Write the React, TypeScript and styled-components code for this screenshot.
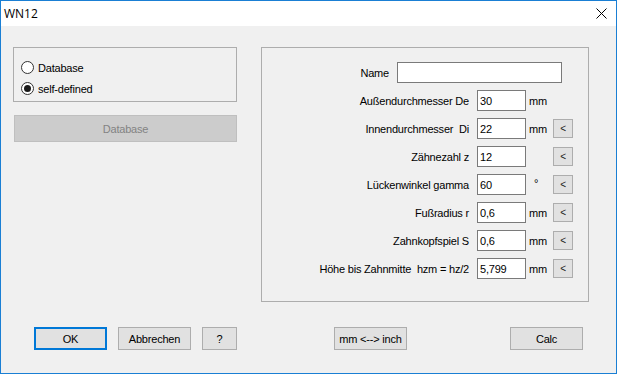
import React from "react";
import styled, { createGlobalStyle } from "styled-components";

const Global = createGlobalStyle`
  html, body { margin: 0; padding: 0; background: #ffffff; }
  * { box-sizing: border-box; }
`;

const Window = styled.div`
  width: 617px;
  height: 374px;
  border: 1px solid #1a7fd4;
  background: #f0f0f0;
  display: flex;
  flex-direction: column;
  font-family: "Liberation Sans", Arial, sans-serif;
  font-size: 11px;
  letter-spacing: -0.2px;
  color: #000;
`;

const TitleBar = styled.div`
  height: 25px;
  background: #ffffff;
  display: flex;
  align-items: center;
  justify-content: space-between;
  padding: 0 9px 0 3px;
`;

const Title = styled.span`
  font-family: "Open Sans", "Noto Sans", sans-serif;
  font-size: 12px;
  letter-spacing: 0;
  color: #000;
`;

const Body = styled.div`
  display: flex;
  gap: 24px;
  padding: 21px 0 0 12px;
`;

const LeftCol = styled.div`
  width: 224px;
  display: flex;
  flex-direction: column;
`;

const GroupBox = styled.div`
  height: 55px;
  border: 1px solid #adadad;
  padding: 9px 0 0 7px;
  display: flex;
  flex-direction: column;
`;

const RadioRow = styled.label`
  height: 21px;
  display: flex;
  align-items: center;
  gap: 4px;
`;

const RadioCircle = styled.span<{ $checked?: boolean }>`
  width: 13px;
  height: 13px;
  border-radius: 50%;
  border: 1px solid #333333;
  background: #ffffff;
  display: flex;
  align-items: center;
  justify-content: center;
  &::after {
    content: "";
    width: 7px;
    height: 7px;
    border-radius: 50%;
    background: ${(p) => (p.$checked ? "#1a1a1a" : "transparent")};
  }
`;

const DisabledButton = styled.div`
  margin: 13px 0 0 1px;
  width: 223px;
  height: 27px;
  background: #cccccc;
  border: 1px solid #bfbfbf;
  color: #838383;
  display: flex;
  align-items: center;
  justify-content: center;
`;

const Panel = styled.div`
  width: 328px;
  height: 255px;
  border: 1px solid #adadad;
  padding-top: 14px;
  display: flex;
  flex-direction: column;
  gap: 7px;
`;

const Row = styled.div`
  height: 21px;
  display: flex;
  align-items: center;
`;

const Label = styled.span<{ $w: number }>`
  width: ${(p) => p.$w}px;
  text-align: right;
  white-space: pre;
  margin-right: 8px;
`;

const Field = styled.div<{ $w: number }>`
  width: ${(p) => p.$w}px;
  height: 21px;
  border: 1px solid #7a7a7a;
  background: #ffffff;
  padding: 0 2px;
  display: flex;
  align-items: center;
`;

const Unit = styled.span<{ $indent?: number }>`
  width: 27px;
  padding-left: ${(p) => p.$indent ?? 3}px;
  align-self: ${(p) => (p.$indent ? "flex-start" : "center")};
  margin-top: ${(p) => (p.$indent ? "3px" : "0")};
`;

const SmallButton = styled.div`
  width: 20px;
  height: 19px;
  margin-top: 1px;
  align-self: flex-start;
  background: #e1e1e1;
  border: 1px solid #adadad;
  font-size: 10px;
  color: #222;
  display: flex;
  align-items: center;
  justify-content: center;
`;

const ButtonBar = styled.div`
  display: flex;
  margin-top: 25px;
  padding-left: 33px;
`;

const Button = styled.div<{ $w: number; $gap?: number; $default?: boolean }>`
  width: ${(p) => p.$w}px;
  height: 23px;
  margin-left: ${(p) => p.$gap ?? 0}px;
  background: #e1e1e1;
  border: ${(p) => (p.$default ? "2px solid #0078d7" : "1px solid #adadad")};
  display: flex;
  align-items: center;
  justify-content: center;
`;

type Param = { label: string; value: string; unit?: string; deg?: boolean; btn?: boolean };

const params: Param[] = [
  { label: "Außendurchmesser De", value: "30", unit: "mm" },
  { label: "Innendurchmesser  Di", value: "22", unit: "mm", btn: true },
  { label: "Zähnezahl z", value: "12", btn: true },
  { label: "Lückenwinkel gamma", value: "60", unit: "°", deg: true, btn: true },
  { label: "Fußradius r", value: "0,6", unit: "mm", btn: true },
  { label: "Zahnkopfspiel S", value: "0,6", unit: "mm", btn: true },
  { label: "Höhe bis Zahnmitte  hzm = hz/2", value: "5,799", unit: "mm", btn: true },
];

export default function App() {
  return (
    <>
      <Global />
      <Window>
        <TitleBar>
          <Title>WN12</Title>
          <svg width="11" height="11" viewBox="0 0 11 11">
            <path d="M0.5 0.5 L10.5 10.5 M10.5 0.5 L0.5 10.5" stroke="#000" strokeWidth="1" />
          </svg>
        </TitleBar>
        <Body>
          <LeftCol>
            <GroupBox>
              <RadioRow>
                <RadioCircle />
                Database
              </RadioRow>
              <RadioRow>
                <RadioCircle $checked />
                self-defined
              </RadioRow>
            </GroupBox>
            <DisabledButton>Database</DisabledButton>
          </LeftCol>
          <Panel>
            <Row>
              <Label $w={127}>Name</Label>
              <Field $w={165} />
            </Row>
            {params.map((p) => (
              <Row key={p.label}>
                <Label $w={207}>{p.label}</Label>
                <Field $w={49}>{p.value}</Field>
                <Unit $indent={p.deg ? 8 : undefined}>{p.unit ?? ""}</Unit>
                {p.btn && <SmallButton>&lt;</SmallButton>}
              </Row>
            ))}
          </Panel>
        </Body>
        <ButtonBar>
          <Button $w={73} $default>OK</Button>
          <Button $w={73} $gap={11}>Abbrechen</Button>
          <Button $w={35} $gap={11}>?</Button>
          <Button $w={73} $gap={97}>mm &lt;--&gt; inch</Button>
          <Button $w={73} $gap={103}>Calc</Button>
        </ButtonBar>
      </Window>
    </>
  );
}
